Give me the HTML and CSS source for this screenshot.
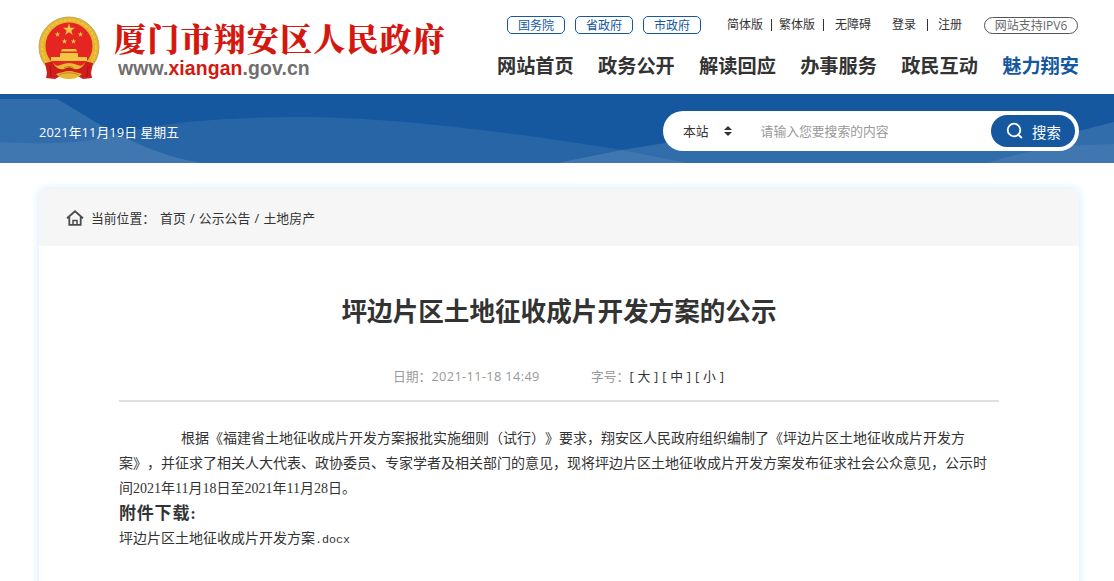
FILE: index.html
```html
<!DOCTYPE html>
<html lang="zh-CN">
<head>
	<meta charset="utf-8">
	<title>坪边片区土地征收成片开发方案的公示</title>
	<link rel="stylesheet" href="styles.css">
</head>
<body>
	<!-- 头部 -->
	<div class="header">
		<div class="logo">
			<svg class="emblem" width="62" height="66" viewBox="0 0 62 66">
				<circle cx="31" cy="31" r="30" fill="#e5b52e" stroke="#b99a55" stroke-width=".8"/>
				<circle cx="31" cy="31" r="27" fill="none" stroke="#efc545" stroke-width="2" stroke-dasharray="3 1.5"/>
				<circle cx="31" cy="30" r="23.500" fill="#e52521"/>
				<g fill="#f1c644">
					<path d="M31 7.500l1.500 4.200h4.500l-3.600 2.800 1.300 4.300L31 16.200l-3.700 2.600 1.300-4.300-3.600-2.800h4.500z"/>
					<path d="M19.500 15.500l.7 1.900h2l-1.600 1.300.6 2-1.700-1.200-1.700 1.200.6-2-1.600-1.300h2z"/>
					<path d="M42.500 15.500l.7 1.900h2l-1.600 1.300.6 2-1.700-1.200-1.700 1.200.6-2-1.600-1.300h2z"/>
					<path d="M26.500 22.500l.7 1.900h2l-1.600 1.300.6 2-1.700-1.200-1.700 1.200.6-2-1.600-1.300h2z"/>
					<path d="M35.500 22.500l.7 1.900h2l-1.600 1.300.6 2-1.700-1.200-1.700 1.200.6-2-1.600-1.300h2z"/>
					<path d="M24 33h14l1 2.500H23zM22 37h18v4h9v4H13v-4h9z"/>
				</g>
				<path fill="#cf1d1d" d="M7 47l7-1.500 3 4.500h28l3-4.500 7 1.500-2 10 1 5-9 1-7-4H24l-7 4-9-1 1-5z"/>
				<path fill="#e8b933" d="M31 47c5 0 9 3 14 3-4 4-8 4-11 2-2-1-4-1-6 0-3 2-7 2-11-2 5 0 9-3 14-3zM31 55c4 0 9 2 13 3-4 4-8 5-13 5s-9-1-13-5c4-1 9-3 13-3z"/>
				<path fill="none" stroke="#c9831f" d="M26 52c3-2 7-2 10 0M21 59c6-3 14-3 20 0"/>
				<path fill="none" stroke="#a51616" d="M12 50l1 11M50 50l-1 11"/>
			</svg>
			<div class="logo-text">
				<h1>厦门市翔安区人民政府</h1>
				<p>www.<b>xiangan</b>.gov.cn</p>
			</div>
		</div>
		<div class="header-right">
			<div class="top-links">
				<a class="btn">国务院</a>
				<a class="btn">省政府</a>
				<a class="btn">市政府</a>
				<a class="first">简体版</a><i></i><a>繁体版</a><i></i><a class="wza">无障碍</a>
				<a class="login">登录</a><i class="sep"></i><a class="reg">注册</a>
				<a class="ipv6">网站支持IPV6</a>
			</div>
			<div class="nav">
				<a>网站首页</a>
				<a>政务公开</a>
				<a>解读回应</a>
				<a>办事服务</a>
				<a>政民互动</a>
				<a class="on">魅力翔安</a>
			</div>
		</div>
	</div>

	<!-- 蓝色横幅 -->
	<div class="banner">
		<svg class="waves" width="1114" height="69" viewBox="0 0 1114 69" fill="#fff">
			<path fill-opacity=".12" d="M0 5H57C85 21 103 34 130 46C155 58 178 65 202 69H0z"/>
			<path fill-opacity=".08" d="M0 48C45 51 85 49 110 42C155 29 220 23 300 23C390 23 510 38 622 56L687 69H0z"/>
			<path fill-opacity=".12" d="M557 69L622 56L665 49C780 38 960 62 1079 37L1114 28V69z"/>
			<path fill-opacity=".08" d="M988 69C1020 58 1055 51 1114 50V69z"/>
		</svg>
		<div class="banner-in">
			<span class="date">2021年11月19日 星期五</span>
			<div class="search">
				<span class="scope">本站</span>
				<svg width="8" height="10" viewBox="0 0 8 10" fill="#333"><path d="M4 0l4 4H0zM4 10L0 6h8z"/></svg>
				<span class="placeholder">请输入您要搜索的内容</span>
				<a class="search-btn">
					<svg width="18" height="18" viewBox="0 0 18 18" fill="none" stroke="#fff" stroke-width="1.8"><circle cx="8" cy="8" r="6.300"/><path d="M12 12.500l4 3.500"/></svg>
					<span>搜索</span>
				</a>
			</div>
		</div>
	</div>

	<!-- 正文 -->
	<div class="main">
		<div class="crumb">
			<svg width="18" height="16" viewBox="0 0 18 16" fill="none" stroke="#4c4c4c" stroke-width="1.8"><path d="M1 8.200L9 1.300l8 6.900M3.300 7v7.800h11.400V7"/><path stroke-width="1.500" d="M7 14.500v-4h4v4"/></svg>
			<span class="label">当前位置：</span>
			<span class="path">首页 / 公示公告 / 土地房产</span>
		</div>
		<div class="article">
			<h2>坪边片区土地征收成片开发方案的公示</h2>
			<div class="info">
				<span class="time">日期：<em>2021-11-18 14:49</em></span>
				<span>字号：</span>
				<span class="size"><a>[ 大 ]</a><a>[ 中 ]</a><a>[ 小 ]</a></span>
			</div>
			<div class="content">
				<p class="indent">根据《福建省土地征收成片开发方案报批实施细则（试行）》要求，翔安区人民政府组织编制了《坪边片区土地征收成片开发方<br>案》，并征求了相关人大代表、政协委员、专家学者及相关部门的意见，现将坪边片区土地征收成片开发方案发布征求社会公众意见，公示时<br>间2021年11月18日至2021年11月28日。</p>
				<h3>附件下载:</h3>
				<p>坪边片区土地征收成片开发方案<span class="ext">.docx</span></p>
			</div>
		</div>
	</div>
</body>
</html>
```
FILE: styles.css
```css
*{margin: 0;padding: 0;box-sizing: border-box;}
body{
	height: 581px;
	overflow: hidden;
	font-family: "Open Sans","Noto Sans CJK SC",sans-serif;
	font-size: 12.8px;
	color: #333;
	background: #fff;
	white-space: nowrap;
	text-spacing-trim: space-all;
}
em,i{font-style: normal;}

/* 头部 */
.header{
	width: 1041px;
	height: 94px;
	margin: 0 auto 0 38px;
	display: flex;
	justify-content: space-between;
}
.logo{
	display: flex;
	padding-top: 16px;
}
.logo-text{
	padding-left: 14px;
}
.logo-text h1{
	font-family: "Noto Serif CJK SC","Noto Sans CJK SC",serif;
	font-size: 32px;
	font-weight: 900;
	letter-spacing: 1.2px;
	line-height: 40px;
	margin-top: 1px;
	color: #d4180f;
}
.logo-text p{
	font: bold 19.4px/22px "Liberation Sans",sans-serif;
	letter-spacing: .12px;
	margin-left: 4px;
	color: #6f6f6f;
}
.logo-text b{color: #d4180f;}
.header-right{
	width: 582px;
}
.top-links{
	display: flex;
	height: 20px;
	margin-top: 15px;
	padding: 0 1px 0 10px;
	align-items: center;
	font-size: 12px;
	line-height: 18px;
}
.top-links .btn{
	width: 58px;
	height: 18px;
	margin-right: 10px;
	border: 1px solid #1558a0;
	border-radius: 5px;
	color: #1558a0;
	line-height: 17px;
	text-align: center;
}
.top-links i{
	width: 1px;
	height: 12px;
	margin: 0 7.5px;
	background: #333;
}
.top-links .first{margin-left: 16px;}
.top-links .wza{margin-left: 4px;}
.top-links .login{margin-left: 21px;}
.top-links .sep{margin: 0 10px 0 11px;}
.top-links .ipv6{
	width: 94px;
	height: 17px;
	margin-left: auto;
	border: 1px solid #555;
	border-radius: 9px;
	color: #666;
	line-height: 15px;
	text-align: center;
}
.nav{
	display: flex;
	justify-content: space-between;
	margin-top: 16px;
	font-size: 19.2px;
	font-weight: bold;
	line-height: 30px;
}
.nav .on{color: #1558a0;}

/* 横幅 */
.banner{
	position: relative;
	height: 69px;
	background: #1558a0;
}
.waves{
	position: absolute;
	left: 0;
	top: 0;
}
.banner-in{
	position: relative;
	width: 1040px;
	height: 69px;
	margin-left: 39px;
	padding-top: 5px;
	display: flex;
	align-items: center;
	justify-content: space-between;
}
.date{
	color: #fff;
	letter-spacing: .1px;
}
.search{
	width: 416px;
	height: 40px;
	padding: 0 4px 0 20px;
	border-radius: 20px;
	background: #fff;
	display: flex;
	align-items: center;
}
.scope{
	margin-right: 15px;
	padding-bottom: 2px;
}
.placeholder{
	margin-left: 29px;
	padding-bottom: 2px;
	color: #999;
}
.search-btn{
	width: 84px;
	height: 32px;
	margin-left: auto;
	padding-left: 15px;
	border-radius: 16px;
	background: #1558a0;
	color: #fff;
	font-size: 14.4px;
	display: flex;
	align-items: center;
	gap: 8px;
}

/* 正文 */
.main{
	width: 1040px;
	height: 420px;
	margin: 26px 0 0 39px;
	border-radius: 6px;
	background: #fff;
	box-shadow: 0 0 10px #d3eaff;
}
.crumb{
	height: 57px;
	padding-left: 27px;
	border-radius: 6px 6px 0 0;
	background: #f6f6f6;
	display: flex;
	align-items: center;
}
.crumb .label{
	margin-left: 7px;
	margin-right: 5px;
}
.crumb .path{
	letter-spacing: .1px;
	word-spacing: .7px;
}
.article{padding: 0 80px;}
.article h2{
	padding-top: 46px;
	font-size: 25.6px;
	line-height: 40px;
	text-align: center;
}
.info{
	height: 70px;
	padding: 34px 0 0 274px;
	border-bottom: 2px solid #e0e0e0;
	color: #999;
	line-height: 20px;
	display: flex;
}
.info .time{width: 198px;}
.info em{letter-spacing: .35px;}
.size{
	color: #333;
	word-spacing: .5px;
	display: flex;
	gap: 4px;
}
.content{
	padding-top: 24px;
	font-family: "Liberation Serif","Noto Sans CJK SC",serif;
	font-size: 14px;
	line-height: 25px;
}
.indent{text-indent: 62px;}
.content h3{
	font-size: 17px;
	letter-spacing: .8px;
	line-height: 25px;
}
.ext{
	font-family: "Liberation Mono",monospace;
	font-size: 11.7px;
}
```
